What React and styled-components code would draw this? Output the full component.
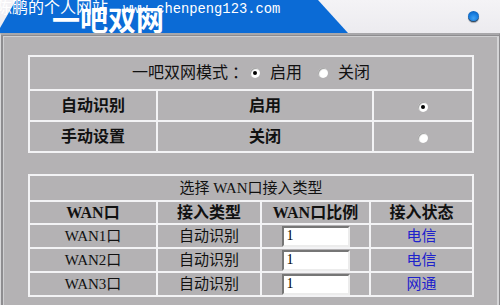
import React from 'react'
import styled, { createGlobalStyle } from 'styled-components'

const GlobalStyle = createGlobalStyle`
  html, body {
    margin: 0;
    padding: 0;
    background: #b4b2b4;
  }
  body {
    width: 500px;
    height: 305px;
    overflow: hidden;
    font-family: "Liberation Serif", "Noto Sans CJK SC", serif;
  }
`

const wans = [
  { port: 'WAN1口', type: '自动识别', ratio: '1', status: '电信' },
  { port: 'WAN2口', type: '自动识别', ratio: '1', status: '电信' },
  { port: 'WAN3口', type: '自动识别', ratio: '1', status: '网通' },
]

export default function App() {
  return (
    <>
      <GlobalStyle />
      <Header>
        <Tab>
          <Title>一吧双网</Title>
        </Tab>
        <Orb />
        <Watermark>
          <span>陈鹏的个人网站</span>
          <Url>www.chenpeng123.com</Url>
        </Watermark>
      </Header>
      <Panel>
        <Grid>
          <colgroup>
            <col style={{ width: 128 }} />
            <col style={{ width: 216 }} />
            <col style={{ width: 100 }} />
          </colgroup>
          <tbody>
            <Row $h={34}>
              <Cell colSpan={3}>
                <ModeLine>
                  <span>一吧双网模式 ：</span>
                  <Radio $checked $gap={2} />
                  <Label>启用</Label>
                  <Radio $gap={16} />
                  <Label>关闭</Label>
                </ModeLine>
              </Cell>
            </Row>
            <Row $h={31}>
              <Cell $bold>自动识别</Cell>
              <Cell $bold>启用</Cell>
              <Cell><Radio $checked /></Cell>
            </Row>
            <Row $h={31}>
              <Cell $bold>手动设置</Cell>
              <Cell $bold>关闭</Cell>
              <Cell><Radio /></Cell>
            </Row>
          </tbody>
        </Grid>

        <Grid $gap={21}>
          <colgroup>
            <col style={{ width: 128 }} />
            <col style={{ width: 104 }} />
            <col style={{ width: 109 }} />
            <col style={{ width: 103 }} />
          </colgroup>
          <tbody>
            <Row $h={26}>
              <Cell colSpan={4}>选择 WAN口接入类型</Cell>
            </Row>
            <Row $h={23}>
              <Cell $bold>WAN口</Cell>
              <Cell $bold>接入类型</Cell>
              <Cell $bold>WAN口比例</Cell>
              <Cell $bold>接入状态</Cell>
            </Row>
            {wans.map(w => (
              <Row $h={24} key={w.port}>
                <Cell>{w.port}</Cell>
                <Cell>{w.type}</Cell>
                <Cell><RatioInput defaultValue={w.ratio} /></Cell>
                <Cell $link>{w.status}</Cell>
              </Row>
            ))}
          </tbody>
        </Grid>
      </Panel>
    </>
  )
}

const Header = styled.header`
  position: relative;
  display: flex;
  align-items: center;
  height: 33px;
  background: linear-gradient(#f4f3f6, #ecebef);
  overflow: hidden;
`

const Tab = styled.div`
  display: flex;
  align-items: center;
  box-sizing: border-box;
  width: 348px;
  height: 100%;
  padding: 4px 0 0 52px;
  background: #0b6bd6;
  clip-path: polygon(0 28px, 16px 0, 318px 0, 348px 100%, 0 100%);
`

const Title = styled.h1`
  margin: 0;
  color: #fff;
  font: 700 28px/1 "Noto Sans CJK SC", sans-serif;
  letter-spacing: 0;
`

const Orb = styled.span`
  width: 11px;
  height: 11px;
  margin-left: auto;
  margin-right: 21px;
  border-radius: 50%;
  background: radial-gradient(circle at 50% 65%, #3fa2f5 0%, #1378dc 55%, #0a4f9c 100%);
  box-shadow: 0 -1px 0 #3a4a5a inset, 0 1px 1px rgba(0, 0, 0, 0.3);
`

const Watermark = styled.div`
  position: absolute;
  top: -2px;
  left: -4px;
  display: flex;
  align-items: baseline;
  color: #fff;
  font: 16px/17px "Noto Sans CJK SC", sans-serif;
  white-space: nowrap;
  pointer-events: none;
`

const Url = styled.span`
  margin-left: 15px;
  font: 13.8px/17px "Liberation Mono", monospace;
`

const Panel = styled.main`
  box-sizing: border-box;
  height: 272px;
  padding: 20px 27px 0 27px;
  background: #b4b2b4;
  border-top: 2px solid #a8a7aa;
  border-left: 1px solid #d8d8da;
  border-right: 1px solid #8c8b8e;
  box-shadow: inset 2px 1px 0 #8e8d90, inset 3px 2px 0 #cfcfd1, inset -2px 0 0 #d4d4d6;
`

const Grid = styled.table`
  width: 444px;
  margin-top: ${p => p.$gap || 0}px;
  border-collapse: collapse;
  table-layout: fixed;
  border: 2px solid #f3f3f5;
`

const Row = styled.tr`
  height: ${p => p.$h}px;
`

const Cell = styled.td`
  padding: 0;
  border: 2px solid #f3f3f5;
  text-align: center;
  vertical-align: middle;
  color: ${p => (p.$link ? '#1e22cc' : '#111')};
  font-size: ${p => (p.$bold ? 16 : 15)}px;
  font-weight: ${p => (p.$bold ? 700 : 400)};
  line-height: 18px;
  white-space: nowrap;
`

const ModeLine = styled.div`
  display: inline-flex;
  align-items: center;
  font-size: 16px;
  color: #111;
`

const Label = styled.span`
  margin-left: 10px;
`

const Radio = styled.span`
  position: relative;
  display: inline-block;
  width: 10px;
  height: 10px;
  margin-left: ${p => p.$gap || 0}px;
  border-radius: 50%;
  background: #fff;
  box-shadow: inset 1px 1px 1px #9d9d9d;
  vertical-align: middle;

  &::after {
    content: '';
    display: ${p => (p.$checked ? 'block' : 'none')};
    position: absolute;
    top: 3px;
    left: 3px;
    width: 4px;
    height: 4px;
    border-radius: 50%;
    background: #000;
  }
`

const RatioInput = styled.input`
  box-sizing: border-box;
  width: 68px;
  height: 21px;
  padding: 0 3px;
  border: 2px solid;
  border-color: #767676 #ececec #ececec #767676;
  background: #fff;
  font: 14px "Liberation Serif", serif;
  color: #000;
  outline: none;
  vertical-align: middle;
`
